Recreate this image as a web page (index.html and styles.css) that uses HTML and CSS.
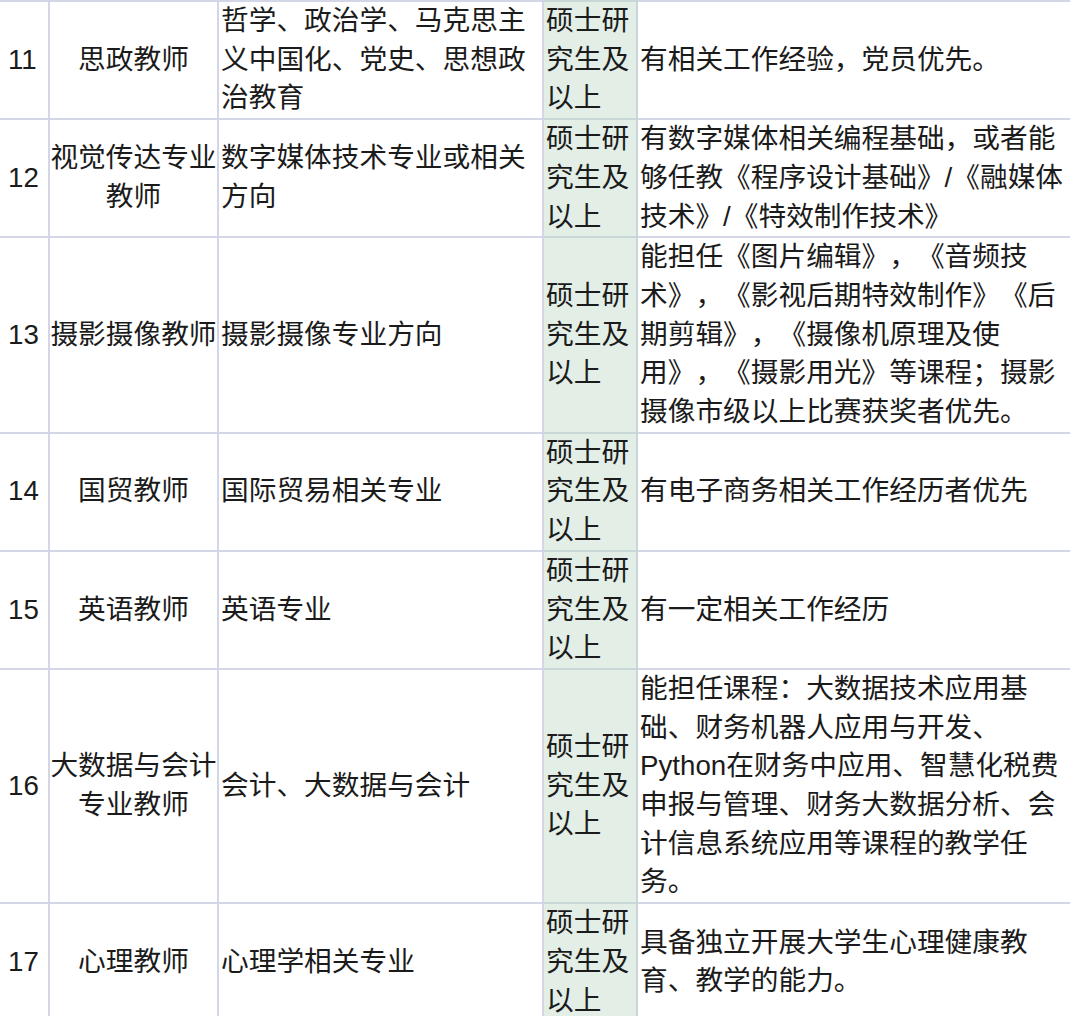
FILE: index.html
```html
<!DOCTYPE html>
<html lang="zh-CN">
<head>
<meta charset="utf-8">
<title>招聘岗位表</title>
<link rel="stylesheet" href="styles.css">
</head>
<body>
<div class="sheet">
<table class="jobs">
  <colgroup>
    <col class="c-no">
    <col class="c-post">
    <col class="c-major">
    <col class="c-degree">
    <col class="c-req">
  </colgroup>
  <tbody>
    <tr>
      <td class="no">11</td>
      <td class="post">思政教师</td>
      <td class="major">哲学、政治学、马克思主义中国化、党史、思想政治教育</td>
      <td class="degree">硕士研究生及以上</td>
      <td class="req">有相关工作经验，党员优先。</td>
    </tr>
    <tr>
      <td class="no">12</td>
      <td class="post">视觉传达专业教师</td>
      <td class="major">数字媒体技术专业或相关方向</td>
      <td class="degree">硕士研究生及以上</td>
      <td class="req">有数字媒体相关编程基础，或者能够任教《程序设计基础》/《融媒体技术》/《特效制作技术》</td>
    </tr>
    <tr>
      <td class="no">13</td>
      <td class="post">摄影摄像教师</td>
      <td class="major">摄影摄像专业方向</td>
      <td class="degree">硕士研究生及以上</td>
      <td class="req">能担任《图片编辑》，《音频技术》，《影视后期特效制作》《后期剪辑》，《摄像机原理及使用》，《摄影用光》等课程；摄影摄像市级以上比赛获奖者优先。</td>
    </tr>
    <tr>
      <td class="no">14</td>
      <td class="post">国贸教师</td>
      <td class="major">国际贸易相关专业</td>
      <td class="degree">硕士研究生及以上</td>
      <td class="req">有电子商务相关工作经历者优先</td>
    </tr>
    <tr>
      <td class="no">15</td>
      <td class="post">英语教师</td>
      <td class="major">英语专业</td>
      <td class="degree">硕士研究生及以上</td>
      <td class="req">有一定相关工作经历</td>
    </tr>
    <tr>
      <td class="no">16</td>
      <td class="post">大数据与会计专业教师</td>
      <td class="major">会计、大数据与会计</td>
      <td class="degree">硕士研究生及以上</td>
      <td class="req">能担任课程：大数据技术应用基础、财务机器人应用与开发、Python在财务中应用、智慧化税费申报与管理、财务大数据分析、会计信息系统应用等课程的教学任务。</td>
    </tr>
    <tr>
      <td class="no">17</td>
      <td class="post">心理教师</td>
      <td class="major">心理学相关专业</td>
      <td class="degree">硕士研究生及以上</td>
      <td class="req">具备独立开展大学生心理健康教育、教学的能力。</td>
    </tr>
  </tbody>
</table>
</div>
</body>
</html>
```

FILE: styles.css
```css
html, body {
  margin: 0;
  padding: 0;
  background: #ffffff;
  overflow: hidden;
}

.sheet {
  width: 1070px;
  height: 1016px;
  overflow: hidden;
}

.jobs {
  margin-left: -2px;
  margin-top: 0;
  width: 1076px;
  table-layout: fixed;
  border-collapse: collapse;
  font-family: "Liberation Sans", "Noto Sans CJK SC", sans-serif;
  font-size: 27.7px;
  line-height: 38.7px;
  color: #1b1b1b;
  text-spacing-trim: space-all;
}

.c-no { width: 50px; }
.c-post { width: 169px; }
.c-major { width: 325px; }
.c-degree { width: 94px; }
.c-req { width: 438px; }

.jobs td {
  border: 2px solid #d2d6e6;
  padding: 0 2px;
  vertical-align: middle;
  text-align: left;
  word-break: normal;
}

.jobs td.no {
  padding-left: 8px;
}

.jobs td.post {
  padding: 0;
  text-align: center;
}

.jobs td.degree {
  background: #e2eee6;
  border-color: #c9d6d8;
}
```
